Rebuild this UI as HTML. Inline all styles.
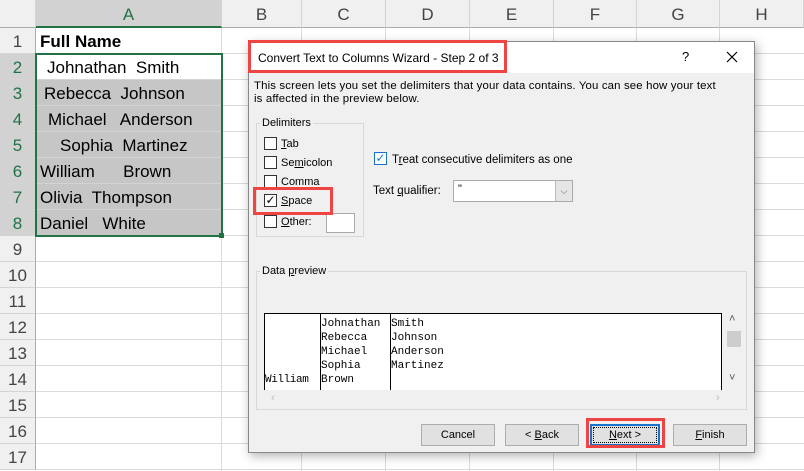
<!DOCTYPE html>
<html><head><style>
*{margin:0;padding:0;box-sizing:border-box}
body{width:804px;height:471px;overflow:hidden;background:#fff;font-family:"Liberation Sans",sans-serif;position:relative}
.a{position:absolute}
.ch{position:absolute;top:0;height:28px;background:#f0f0f0;border-right:1px solid #d4d4d4;border-bottom:1px solid #aaa;font-size:17px;color:#444;text-align:center;line-height:30px}
.rh{position:absolute;left:0;width:36px;height:26px;background:#f0f0f0;border-bottom:1px solid #d4d4d4;border-right:1px solid #aaa;font-size:17px;color:#444;text-align:center;line-height:27px}
.hl{background:#d2d2d2;color:#217346}
.cell{position:absolute;left:36px;width:186px;height:26px;border-bottom:1px solid #d4d4d4;font-size:17px;line-height:27px;white-space:pre;color:#000}
.vl{position:absolute;top:28px;width:1px;height:443px;background:#dadada}
.hline{position:absolute;left:36px;width:768px;height:1px;background:#dadada}
.dlg{position:absolute;left:248px;top:41px;width:507px;height:412px;background:#f0f0f0;border:1px solid #888;box-shadow:2px 3px 10px rgba(0,0,0,.3);font-size:11px;color:#000}
.cb{position:absolute;width:13px;height:13px;border:1px solid #333;background:#fff}
.lab{position:absolute;font-size:11px}
.btn{position:absolute;top:382px;width:74px;height:22px;border:1px solid #adadad;background:#e1e1e1;text-align:center;line-height:20px;font-size:11px}
.red{position:absolute;border:3px solid #ee4444}
.mono{font-family:"Liberation Mono",monospace;font-size:11px;position:absolute;white-space:pre;line-height:14px}
</style></head><body>
<div class="ch" style="left:0;width:36px;background:#f0f0f0"></div>
<div class="ch hl" style="left:36px;width:186px;border-bottom:2px solid #217346">A</div>
<div class="ch" style="left:222px;width:80px">B</div>
<div class="ch" style="left:302px;width:84px">C</div>
<div class="ch" style="left:386px;width:84px">D</div>
<div class="ch" style="left:470px;width:84px">E</div>
<div class="ch" style="left:554px;width:83px">F</div>
<div class="ch" style="left:637px;width:83px">G</div>
<div class="ch" style="left:720px;width:84px">H</div>
<div class="vl" style="left:221px"></div><div class="vl" style="left:301px"></div><div class="vl" style="left:385px"></div><div class="vl" style="left:469px"></div><div class="vl" style="left:553px"></div><div class="vl" style="left:636px"></div><div class="vl" style="left:719px"></div>
<div class="hline" style="top:53px"></div><div class="hline" style="top:79px"></div><div class="hline" style="top:105px"></div><div class="hline" style="top:131px"></div><div class="hline" style="top:157px"></div><div class="hline" style="top:183px"></div><div class="hline" style="top:209px"></div><div class="hline" style="top:235px"></div><div class="hline" style="top:261px"></div><div class="hline" style="top:287px"></div><div class="hline" style="top:313px"></div><div class="hline" style="top:339px"></div><div class="hline" style="top:365px"></div><div class="hline" style="top:391px"></div><div class="hline" style="top:417px"></div><div class="hline" style="top:443px"></div><div class="hline" style="top:469px"></div>
<div class="rh" style="top:28px">1</div>
<div class="rh hl" style="top:54px">2</div><div class="rh hl" style="top:80px">3</div><div class="rh hl" style="top:106px">4</div><div class="rh hl" style="top:132px">5</div><div class="rh hl" style="top:158px">6</div><div class="rh hl" style="top:184px">7</div><div class="rh hl" style="top:210px">8</div>
<div class="rh" style="top:236px">9</div><div class="rh" style="top:262px">10</div><div class="rh" style="top:288px">11</div><div class="rh" style="top:314px">12</div><div class="rh" style="top:340px">13</div><div class="rh" style="top:366px">14</div><div class="rh" style="top:392px">15</div><div class="rh" style="top:418px">16</div><div class="rh" style="top:444px">17</div>
<div class="cell" style="top:28px;font-weight:bold;padding-left:4px">Full Name</div>
<div class="cell" style="top:54px;padding-left:11px">Johnathan  Smith</div>
<div class="cell" style="top:80px;background:#c6c6c6;padding-left:8px">Rebecca  Johnson</div>
<div class="cell" style="top:106px;background:#c6c6c6;padding-left:12px">Michael   Anderson</div>
<div class="cell" style="top:132px;background:#c6c6c6;padding-left:24px">Sophia  Martinez</div>
<div class="cell" style="top:158px;background:#c6c6c6;padding-left:4px">William      Brown</div>
<div class="cell" style="top:184px;background:#c6c6c6;padding-left:4px">Olivia  Thompson</div>
<div class="cell" style="top:210px;background:#c6c6c6;padding-left:4px">Daniel   White</div>
<div class="a" style="left:35px;top:53px;width:188px;height:184px;border:2px solid #217346"></div>
<div class="a" style="left:219px;top:233px;width:5px;height:5px;background:#217346"></div>

<div class="dlg">
 <div class="a" style="left:0;top:0;width:505px;height:31px;background:#fff"></div>
 <div class="a" style="left:9px;top:9px;font-size:12px">Convert Text to Columns Wizard - Step 2 of 3</div>
 <div class="a" style="left:433px;top:7px;font-size:13px">?</div>
 <svg class="a" style="left:477px;top:9px" width="12" height="12"><path d="M1 1L11 11M11 1L1 11" stroke="#000" stroke-width="1.2"/></svg>
 <div class="a" style="left:5px;top:38px;line-height:13px;width:470px;font-size:11.4px;letter-spacing:.15px">This screen lets you set the delimiters that your data contains. You can see how your text is affected in the preview below.</div>
 <div class="a" style="left:7px;top:81px;width:108px;height:114px;border:1px solid #d8d8d8"></div>
 <div class="lab" style="left:11px;top:75px;background:#f0f0f0;padding:0 2px">Delimiters</div>
 <div class="cb" style="left:15px;top:95px"></div><div class="lab" style="left:32px;top:96px"><u>T</u>ab</div>
 <div class="cb" style="left:15px;top:114px"></div><div class="lab" style="left:32px;top:115px">Se<u>m</u>icolon</div>
 <div class="cb" style="left:15px;top:133px"></div><div class="lab" style="left:32px;top:134px">Comma</div>
 <div class="cb" style="left:15px;top:152px;font-size:12px;line-height:11px;text-align:center">✓</div><div class="lab" style="left:32px;top:153px"><u>S</u>pace</div>
 <div class="cb" style="left:15px;top:173px"></div><div class="lab" style="left:32px;top:174px"><u>O</u>ther:</div>
 <div class="a" style="left:77px;top:171px;width:29px;height:20px;border:1px solid #aaa;background:#fff"></div>
 <div class="red" style="left:4px;top:145px;width:80px;height:28px"></div>
 <div class="cb" style="left:125px;top:110px;border-color:#1a73c8;color:#1a73c8;font-size:12px;line-height:11px;text-align:center">✓</div>
 <div class="lab" style="left:143px;top:112px;font-size:11.5px">T<u>r</u>eat consecutive delimiters as one</div>
 <div class="lab" style="left:124px;top:143px;font-size:11.5px">Text <u>q</u>ualifier:</div>
 <div class="a" style="left:204px;top:138px;width:120px;height:22px;border:1px solid #aaa;background:#fff"><span style="position:absolute;left:4px;top:2px">"</span><div style="position:absolute;right:0;top:0;width:17px;height:20px;background:#e5e5e5;border-left:1px solid #bbb;font-size:9px;text-align:center;line-height:20px;color:#555">⌵</div></div>
 <div class="a" style="left:7px;top:229px;width:491px;height:139px;border:1px solid #d8d8d8"></div>
 <div class="lab" style="left:11px;top:223px;background:#f0f0f0;padding:0 2px">Data <u>p</u>review</div>
 <div class="a" style="left:15px;top:271px;width:458px;height:77px;background:#fff;border:1px solid #000;border-bottom:none;overflow:hidden">
  <div class="a" style="left:55px;top:0;width:1px;height:77px;background:#000"></div>
  <div class="a" style="left:125px;top:0;width:1px;height:77px;background:#000"></div>
  <div class="mono" style="left:56px;top:3px">Johnathan
Rebecca
Michael
Sophia</div>
  <div class="mono" style="left:126px;top:3px">Smith
Johnson
Anderson
Martinez</div>
  <div class="mono" style="left:0;top:59px;letter-spacing:-0.4px">William</div>
  <div class="mono" style="left:56px;top:59px">Brown</div>
 </div>
 <div class="a" style="left:478px;top:289px;width:14px;height:16px;background:#cdcdcd"></div>
 <div class="lab" style="left:480px;top:271px;color:#555">˄</div>
 <div class="lab" style="left:480px;top:330px;color:#555">˅</div>
 <div class="lab" style="left:22px;top:350px;color:#bbb">‹</div>
 <div class="lab" style="left:467px;top:350px;color:#bbb">›</div>
 <div class="btn" style="left:172px">Cancel</div>
 <div class="btn" style="left:256px">&lt; <u>B</u>ack</div>
 <div class="btn" style="left:341px;width:70px;border:2px solid #1a73c8"><div style="border:1px dotted #000;height:16px;margin:1px;line-height:14px"><u>N</u>ext &gt;</div></div>
 <div class="red" style="left:337px;top:376px;width:79px;height:30px"></div>
 <div class="btn" style="left:424px"><u>F</u>inish</div>
</div>
<div class="red" style="left:248px;top:40px;width:259px;height:33px"></div>
</body></html>
